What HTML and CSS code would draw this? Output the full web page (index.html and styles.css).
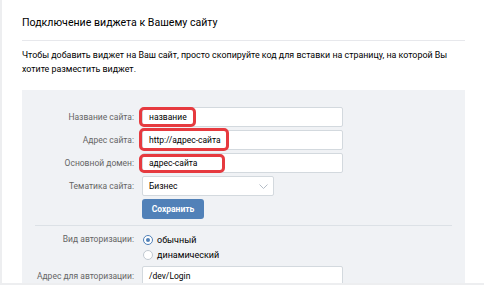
FILE: index.html
```html
<!DOCTYPE html>
<html lang="ru">
<head>
<meta charset="utf-8">
<title>Подключение виджета</title>
<link rel="stylesheet" href="styles.css">
</head>
<body>
<div class="page">
  <div class="card">
    <h1 class="title">Подключение виджета к Вашему сайту</h1>
    <p class="desc">Чтобы добавить виджет на Ваш сайт, просто скопируйте код для вставки на страницу, на которой Вы хотите разместить виджет.</p>
    <div class="form">
      <div class="row">
        <div class="label">Название сайта:</div>
        <div class="field">
          <div class="input">название</div>
          <span class="mark mark1"></span>
        </div>
      </div>
      <div class="row">
        <div class="label">Адрес сайта:</div>
        <div class="field">
          <div class="input">http://адрес-сайта</div>
          <span class="mark mark2"></span>
        </div>
      </div>
      <div class="row">
        <div class="label">Основной домен:</div>
        <div class="field">
          <div class="input">адрес-сайта</div>
          <span class="mark mark3"></span>
        </div>
      </div>
      <div class="row">
        <div class="label">Тематика сайта:</div>
        <div class="field">
          <div class="select">Бизнес
            <svg class="chev" width="9" height="5" viewBox="0 0 9 5"><path d="M0.5 0.5l4 4 4-4" fill="none" stroke="#b4bdc7" stroke-width="1"/></svg>
          </div>
        </div>
      </div>
      <div class="row">
        <div class="label"></div>
        <button class="btn">Сохранить</button>
      </div>
      <div class="sep"></div>
      <div class="row row-top">
        <div class="label">Вид авторизации:</div>
        <div class="radios">
          <div class="radio-item"><span class="radio on"></span>обычный</div>
          <div class="radio-item"><span class="radio"></span>динамический</div>
        </div>
      </div>
      <div class="row row-login">
        <div class="label">Адрес для авторизации:</div>
        <div class="field">
          <div class="input">/dev/Login</div>
        </div>
      </div>
    </div>
  </div>
</div>
</body>
</html>
```

FILE: styles.css
```css
* { box-sizing: border-box; }
html, body { margin: 0; padding: 0; }
body {
  background: #edeef0;
  font-family: Roboto, "Open Sans", "Liberation Sans", sans-serif;
  color: #000;
}
.page {
  display: flex;
  padding-left: 2px;
  height: 285px;
}
.card {
  flex: 1;
  height: 283px;
  overflow: hidden;
  background: #fff;
  padding: 0 19px 0 20px;
}
.title {
  margin: 0;
  height: 41px;
  padding-top: 15px;
  font-size: 10.6px;
  line-height: 16px;
  font-weight: 400;
  border-bottom: 1px solid #e7e8ec;
  color: #000;
}
.desc {
  margin: 0;
  padding-top: 7px;
  font-size: 8.9px;
  line-height: 14px;
  height: 49px;
}
.form {
  background: #f0f2f5;
  padding: 17px 0 0 0;
  height: 300px;
}
.row {
  display: flex;
  align-items: center;
  margin-bottom: 3px;
}
.label {
  width: 112px;
  margin-right: 8px;
  text-align: right;
  font-size: 8.5px;
  color: #656565;
  flex: none;
}
.field { position: relative; }
.input {
  width: 201px;
  height: 20px;
  background: #fff;
  border: 1px solid #d3d9de;
  border-radius: 2px;
  padding: 0 6px;
  font-size: 8.5px;
  line-height: 18px;
  color: #000;
}
.select {
  position: relative;
  width: 132px;
  height: 20px;
  background: #fff;
  border: 1px solid #d3d9de;
  border-radius: 2px;
  padding: 0 6px;
  font-size: 8.5px;
  line-height: 18px;
}
.chev { position: absolute; right: 5px; top: 7px; }
.mark {
  position: absolute;
  border: 3px solid #e63a3f;
  border-radius: 5px;
  pointer-events: none;
}
.mark1 { left: -3px; top: 0; width: 57px; height: 20px; }
.mark2 { left: -3px; top: -2px; width: 90px; height: 23px; }
.mark3 { left: -3px; top: 1px; width: 86px; height: 19px; }
.btn {
  width: 62px;
  height: 20px;
  border: 0;
  border-radius: 3px;
  background: #5181b8;
  color: #fff;
  font-family: inherit;
  font-size: 8.5px;
  font-weight: 700;
  padding: 0;
}
.sep {
  margin: 6px 13px 6px 13px;
  border-top: 1px solid #dce1e6;
}
.row-top { align-items: flex-start; }
.row-top .label { line-height: 15px; }
.radios { display: flex; flex-direction: column; }
.radio-item {
  display: flex;
  align-items: center;
  height: 15px;
  font-size: 9px;
}
.radio {
  width: 10px;
  height: 10px;
  border: 1px solid #c1c9d1;
  border-radius: 50%;
  background: #fff;
  margin-right: 4px;
  margin-left: 1px;
  position: relative;
}
.radio.on { border-color: #5181b8; }
.radio.on::after {
  content: "";
  position: absolute;
  left: 2px; top: 2px;
  width: 4px; height: 4px;
  border-radius: 50%;
  background: #5181b8;
}
.row-login { margin-top: 4px; }
```
